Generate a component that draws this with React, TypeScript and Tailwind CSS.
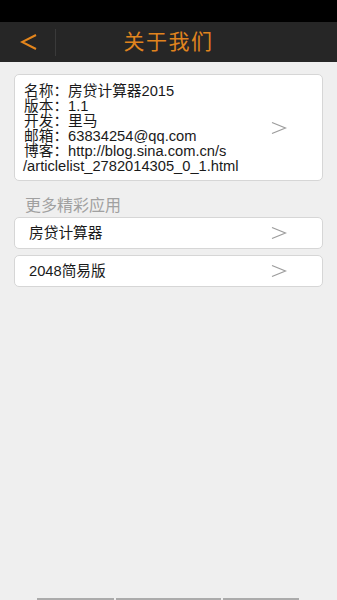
import React from "react";

const font = { fontFamily: '"Liberation Sans", "Noto Sans CJK SC", sans-serif' };

function Arrow() {
  return (
    <svg width="16" height="14" viewBox="0 0 16 14">
      <path d="M1 1.5 L14.5 7 L1 12.5" fill="none" stroke="#9c9c9c" strokeWidth="1.3" />
    </svg>
  );
}

export default function App() {
  return (
    <div className="w-[337px] h-[600px] bg-[#efefef] flex flex-col overflow-hidden" style={font}>
      <div className="h-[22px] bg-black shrink-0" />
      <div className="h-[40px] bg-[#262626] shrink-0 flex items-center relative">
        <div className="w-[55px] flex justify-center items-center h-full">
          <svg width="18" height="16" viewBox="0 0 18 16" className="ml-[2px]">
            <path d="M16 1 L2 8 L16 15" fill="none" stroke="#e5861c" strokeWidth="2" />
          </svg>
        </div>
        <div className="w-px h-[27px] bg-[#3a3a3a]" />
        <div className="absolute left-0 right-0 top-0 bottom-0 flex items-center justify-center pointer-events-none">
          <span className="text-[21px] text-[#e0841e] tracking-[1.5px]">关于我们</span>
        </div>
      </div>

      <div className="px-[14px] pt-[12px] flex flex-col">
        <div className="bg-white border border-[#d6d6d6] rounded-[5px] h-[107px] pl-[9px] pr-[35px] flex items-center justify-between">
          <div className="text-[14.7px] leading-[15px] text-[#1a1a1a] pt-[2px]">
            <div>名称：房贷计算器2015</div>
            <div>版本：1.1</div>
            <div>开发：里马</div>
            <div>邮箱：63834254@qq.com</div>
            <div>博客：http://blog.sina.com.cn/s</div>
            <div className="-ml-[1px]">/articlelist_2782014305_0_1.html</div>
          </div>
          <Arrow />
        </div>

        <div className="text-[16px] text-[#a0a0a0] mt-[15px] ml-[11px] leading-[20px]">更多精彩应用</div>

        <div className="mt-[1px] bg-white border border-[#d6d6d6] rounded-[5px] h-[32px] pl-[14px] pr-[35px] flex items-center justify-between">
          <span className="text-[14.7px] text-[#1a1a1a]">房贷计算器</span>
          <Arrow />
        </div>
        <div className="mt-[6px] bg-white border border-[#d6d6d6] rounded-[5px] h-[32px] pl-[14px] pr-[35px] flex items-center justify-between">
          <span className="text-[14.7px] text-[#1a1a1a]">2048简易版</span>
          <Arrow />
        </div>
      </div>

      <div className="flex-1" />
      <div className="h-[2px] flex shrink-0">
        <div className="w-[37px]" />
        <div className="w-[77px] bg-[#ababab]" />
        <div className="w-[2px]" />
        <div className="w-[105px] bg-[#ababab]" />
        <div className="w-[2px]" />
        <div className="w-[76px] bg-[#ababab]" />
      </div>
    </div>
  );
}
